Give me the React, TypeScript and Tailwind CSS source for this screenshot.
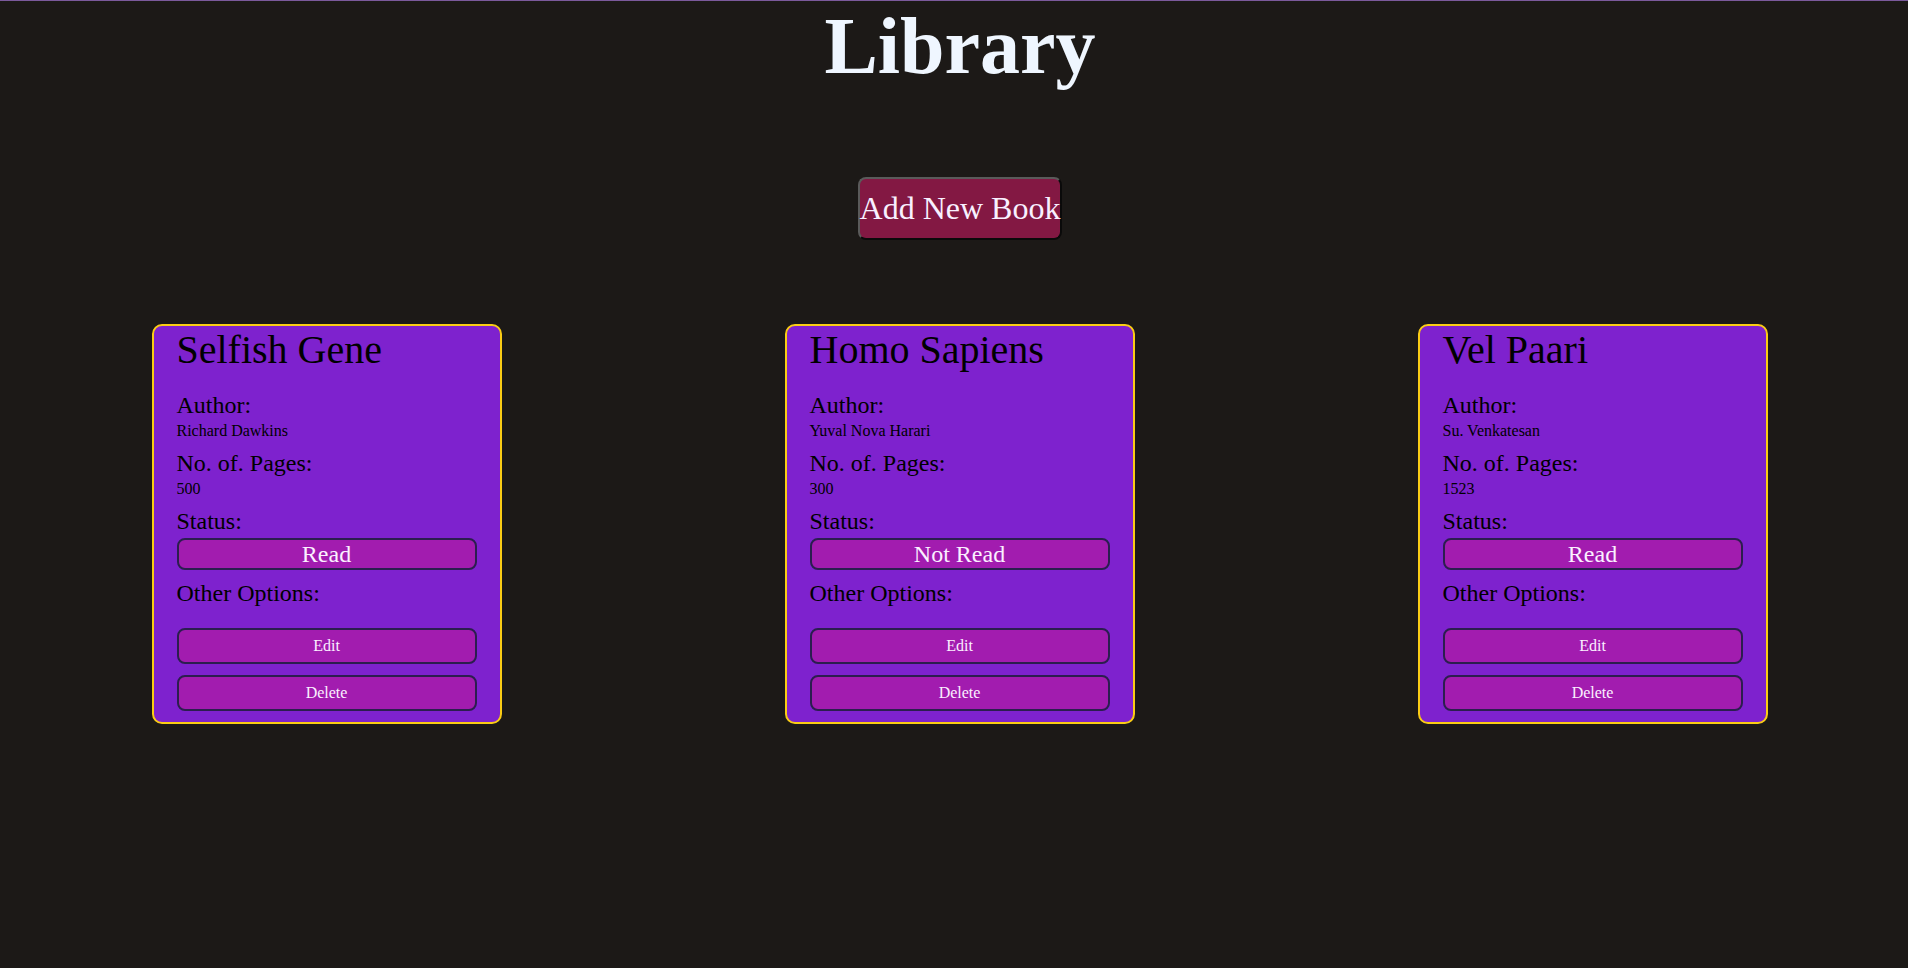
import React from "react";

type Book = { title: string; author: string; pages: string; status: string };

const books: Book[] = [
  { title: "Selfish Gene", author: "Richard Dawkins", pages: "500", status: "Read" },
  { title: "Homo Sapiens", author: "Yuval Nova Harari", pages: "300", status: "Not Read" },
  { title: "Vel Paari", author: "Su. Venkatesan", pages: "1523", status: "Read" },
];

function Card({ b }: { b: Book }) {
  return (
    <div className="w-[350px] border-2 border-[#facc15] rounded-[10px] bg-[#7e22ce] px-[23px] pb-[11px] text-black flex flex-col">
      <h2 className="text-[40px] leading-[normal] m-0 font-normal">{b.title}</h2>
      <div className="mt-[19px] text-[24px] leading-[normal]">Author:</div>
      <div className="mt-[3px] text-[16px] leading-[normal]">{b.author}</div>
      <div className="mt-[10px] text-[24px] leading-[normal]">No. of. Pages:</div>
      <div className="mt-[3px] text-[16px] leading-[normal]">{b.pages}</div>
      <div className="mt-[10px] text-[24px] leading-[normal]">Status:</div>
      <button className="mt-[3px] w-full h-[32px] border-2 border-[#2b1e4f] rounded-[8px] bg-[#a21caf] text-[24px] leading-[normal] text-[#fbf0ff] p-0">
        {b.status}
      </button>
      <div className="mt-[10px] text-[24px] leading-[normal]">Other Options:</div>
      <button className="mt-[21px] w-full h-[36px] border-2 border-[#2b1e4f] rounded-[8px] bg-[#a21caf] text-[16px] leading-[normal] text-[#fbf0ff] p-0">
        Edit
      </button>
      <button className="mt-[11px] w-full h-[36px] border-2 border-[#2b1e4f] rounded-[8px] bg-[#a21caf] text-[16px] leading-[normal] text-[#fbf0ff] p-0">
        Delete
      </button>
    </div>
  );
}

export default function App() {
  return (
    <div
      className="min-h-[968px] w-full bg-[#1c1917] border-t border-[#7b5a9c] overflow-hidden"
      style={{ fontFamily: '"Liberation Serif", "Times New Roman", serif' }}
    >
      <div className="pl-[12px] flex flex-col items-center">
        <h1 className="m-0 text-[80px] leading-[normal] font-bold text-[#eff6ff]">Library</h1>
        <button className="mt-[85px] h-[63px] px-0 py-0 rounded-[8px] bg-[#831843] text-[32px] leading-[normal] text-[#f8f0ff] border-2 border-t-[#5a5a5a] border-l-[#5a5a5a] border-b-[#0a0a0a] border-r-[#0a0a0a]">
          Add New Book
        </button>
      </div>
      <div className="mt-[84px] pl-[10px] grid grid-cols-[repeat(3,633px)] justify-items-center items-start">
        {books.map((b) => (
          <Card key={b.title} b={b} />
        ))}
      </div>
    </div>
  );
}
